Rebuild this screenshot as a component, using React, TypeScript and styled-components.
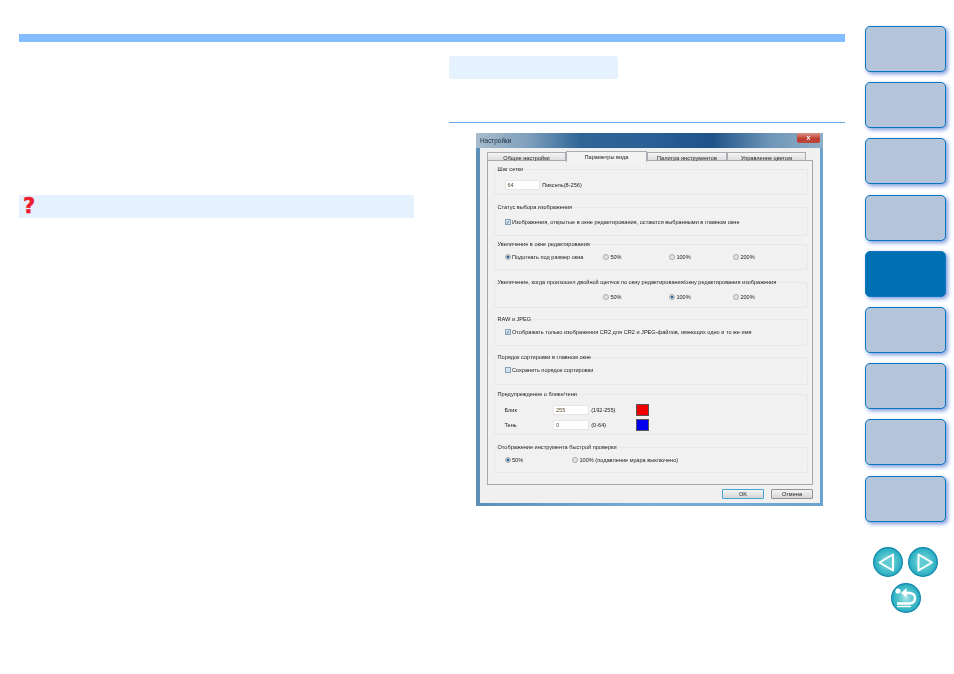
import React from "react";
import styled, { createGlobalStyle } from "styled-components";

const Global = createGlobalStyle`
  html, body { margin: 0; padding: 0; background: #fff; }
  body { font-family: "Liberation Sans", Arial, sans-serif; }
`;

const Page = styled.div`
  display: flex;
  align-items: flex-start;
  width: 954px;
  height: 674px;
  box-sizing: border-box;
  padding: 26px 0 0 19px;
  overflow: hidden;
`;
const Main = styled.main`
  width: 826px;
  margin-top: 8px;
`;
const TopBar = styled.div`
  height: 8px;
  background: #84bcff;
`;
const Columns = styled.div`
  display: grid;
  grid-template-columns: 395px 396px;
  column-gap: 35px;
`;
const LeftCol = styled.section`
  padding-top: 153px;
`;
const Callout = styled.div`
  display: flex;
  align-items: center;
  height: 23px;
  padding-left: 4px;
  background: #e5f1fd;
`;
const Question = styled.span`
  font: bold 21px/23px "DejaVu Sans", sans-serif;
  color: #ee1c2e;
  -webkit-text-stroke: 0.5px #ee1c2e;
`;
const RightCol = styled.section`
  padding-top: 14px;
`;
const Pill = styled.div`
  width: 169px;
  height: 23px;
  border-radius: 3px;
  background: #e5f1fd;
`;
const Rule = styled.div`
  height: 1px;
  margin-top: 43px;
  background: #6aa8ec;
`;
const Dialog = styled.div`
  width: 346.5px;
  height: 373px;
  margin: 10px 0 0 27px;
  display: flex;
  flex-direction: column;
  background: linear-gradient(90deg, #5b8fb8 0, #78add3 50%, #6aa4cf 100%);
  font-family: "Liberation Sans", sans-serif;
  font-size: 5.6px;
  color: #222;
  filter: blur(0.35px);
`;
const TitleBar = styled.div`
  display: flex;
  align-items: flex-start;
  justify-content: space-between;
  height: 15px;
  flex: none;
  padding: 3px 2.5px 0 4px;
  box-sizing: border-box;
  background: linear-gradient(90deg, #a8bccd 0, #7fa0bd 15%, #2f6596 30%, #2a6096 50%, #1e5288 68%, #6f97b8 85%, #8fadc6 100%);
  color: #1c2c3a;
  font-size: 6.4px;
  line-height: 10px;
`;
const CloseBtn = styled.div`
  width: 23px;
  height: 10px;
  margin-top: -3px;
  display: flex;
  align-items: center;
  justify-content: center;
  border-radius: 0 0 2px 2px;
  background: linear-gradient(180deg, #d9948a 0, #c0392b 60%, #b74a3c 100%);
  color: #fff;
  font: bold 7px/10px "Liberation Sans", sans-serif;
`;
const DialogBody = styled.div`
  flex: 1;
  display: flex;
  flex-direction: column;
  margin: 0 2.5px 3.5px 3.5px;
  background: #f0f0f0;
`;
const Tabs = styled.div`
  display: grid;
  grid-template-columns: 79px 81px 80px 79px;
  height: 9px;
  margin: 3px 14px 0 7.5px;
  align-items: end;
`;
const Tab = styled.div<{ $active?: boolean }>`
  height: ${(p) => (p.$active ? 11 : 9)}px;
  box-sizing: border-box;
  margin-bottom: ${(p) => (p.$active ? -1 : 0)}px;
  text-align: center;
  line-height: ${(p) => (p.$active ? 10 : 11)}px;
  border: 1px solid #a9adb1;
  border-bottom: ${(p) => (p.$active ? "none" : "1px solid #a9adb1")};
  background: ${(p) => (p.$active ? "#f3f3f3" : "linear-gradient(180deg,#f4f4f4,#dedede)")};
  position: relative;
  z-index: ${(p) => (p.$active ? 1 : 0)};
`;
const Panel = styled.div`
  height: 325px;
  margin: 0 7px;
  box-sizing: border-box;
  padding: 5px 4.5px 0 6px;
  border: 1px solid #a4a8ab;
  background: #f1f1f1;
`;
const Group = styled.fieldset<{ $h: number; $gap: number }>`
  height: ${(p) => p.$h}px;
  margin: ${(p) => p.$gap}px 0 0;
  padding: 0;
  box-sizing: border-box;
  min-width: 0;
  border: 1px solid #e4e9ee;
  border-radius: 2px;
`;
const Legend = styled.legend`
  margin-left: 2px;
  padding: 0 1px;
  line-height: 7px;
  font-size: 5.6px;
`;
const Row = styled.div<{ $top?: number; $left?: number }>`
  display: flex;
  align-items: center;
  height: 11px;
  margin-top: ${(p) => p.$top ?? 0}px;
  padding-left: ${(p) => p.$left ?? 10}px;
  white-space: nowrap;
`;
const Cell = styled.div<{ $w: number }>`
  display: flex;
  align-items: center;
  width: ${(p) => p.$w}px;
  flex: none;
`;
const Input = styled.div<{ $w: number }>`
  box-sizing: border-box;
  width: ${(p) => p.$w}px;
  height: 10px;
  padding-left: 2px;
  margin-right: 2.7px;
  line-height: 9px;
  background: #fff;
  border: 1px solid #e6e6e6;
  color: #5a4a30;
  flex: none;
`;
const Radio = styled.span<{ $on?: boolean }>`
  box-sizing: border-box;
  width: 6px;
  height: 6px;
  margin-right: 1.5px;
  flex: none;
  border-radius: 50%;
  border: 1px solid #a6acb1;
  background: ${(p) => (p.$on ? "radial-gradient(circle,#2b5f8f 0 45%,#dfe8ef 60%)" : "#e4e4e4")};
`;
const Check = styled.span<{ $on?: boolean }>`
  box-sizing: border-box;
  display: flex;
  align-items: center;
  justify-content: center;
  width: 6.5px;
  height: 6.5px;
  margin-right: 1px;
  flex: none;
  border: 1px solid #8aa0b4;
  background: ${(p) => (p.$on ? "#d6e4f0" : "#cfe3f3")};
  color: #27466a;
  font-size: 5px;
  line-height: 5px;
`;
const Swatch = styled.div<{ $c: string }>`
  width: 13px;
  height: 12px;
  flex: none;
  box-sizing: border-box;
  background: ${(p) => p.$c};
  border: 1px solid #555;
`;
const Footer = styled.div`
  display: flex;
  justify-content: flex-end;
  gap: 7px;
  margin: 4px 7px 0 0;
`;
const Btn = styled.div<{ $primary?: boolean }>`
  width: 42px;
  height: 9.5px;
  box-sizing: border-box;
  text-align: center;
  line-height: 8px;
  border: 1px solid ${(p) => (p.$primary ? "#45a5d6" : "#939393")};
  border-radius: 1px;
  background: linear-gradient(180deg, #f4f4f4, #d6d6d6);
`;

const Sidebar = styled.nav`
  margin-left: 20px;
  width: 81px;
  display: flex;
  flex-direction: column;
  gap: 10.2px;
  align-items: flex-start;
`;
const NavBtn = styled.div<{ $active?: boolean }>`
  width: 81px;
  height: 46px;
  box-sizing: border-box;
  border-radius: 5px;
  border: 1.5px solid #0a78be;
  background: ${(p) => (p.$active ? "#0070b5" : "#b4c5db")};
  box-shadow: 2px 2px 4px #7d9ade;
`;
const Arrows = styled.div`
  width: 81px;
  margin-top: 15px;
  display: grid;
  grid-template-columns: 30px 30px;
  justify-content: center;
  column-gap: 5px;
  row-gap: 6px;
  justify-items: center;
`;
const Round = styled.svg<{ $span?: boolean }>`
  width: 30px;
  height: 30px;
  display: block;
  ${(p) => (p.$span ? "grid-column: 1 / span 2;" : "")}
`;

const Disc = () => (
  <>
    <defs>
      <radialGradient id="disc" cx="50%" cy="50%" r="55%">
        <stop offset="0" stopColor="#a8e4e8" />
        <stop offset="0.55" stopColor="#4cc0cc" />
        <stop offset="1" stopColor="#1ba6bd" />
      </radialGradient>
    </defs>
    <circle cx="15" cy="15" r="14.4" fill="url(#disc)" stroke="#1487ad" strokeWidth="1.2" />
  </>
);

const App = () => (
  <>
    <Global />
    <Page>
      <Main>
        <TopBar />
        <Columns>
          <LeftCol>
            <Callout>
              <Question>?</Question>
            </Callout>
          </LeftCol>
          <RightCol>
            <Pill />
            <Rule />
            <Dialog>
              <TitleBar>
                <span>Настройки</span>
                <CloseBtn>x</CloseBtn>
              </TitleBar>
              <DialogBody>
                <Tabs>
                  <Tab>Общие настройки</Tab>
                  <Tab $active>Параметры вида</Tab>
                  <Tab>Палитра инструментов</Tab>
                  <Tab>Управление цветом</Tab>
                </Tabs>
                <Panel>
                  <Group $h={29} $gap={0}>
                    <Legend>Шаг сетки</Legend>
                    <Row $top={6.5}>
                      <Input $w={35}>64</Input>
                      <span>Пиксель(8-256)</span>
                    </Row>
                  </Group>
                  <Group $h={32.5} $gap={8.5}>
                    <Legend>Статус выбора изображения</Legend>
                    <Row $top={6}>
                      <Check $on>✓</Check>
                      <span>Изображения, открытые в окне редактирования, остаются выбранными в главном окне</span>
                    </Row>
                  </Group>
                  <Group $h={29.5} $gap={4.5}>
                    <Legend>Увеличение в окне редактирования</Legend>
                    <Row $top={4}>
                      <Cell $w={98.4}><Radio $on /><span>Подогнать под размер окна</span></Cell>
                      <Cell $w={66}><Radio /><span>50%</span></Cell>
                      <Cell $w={64}><Radio /><span>100%</span></Cell>
                      <Cell $w={40}><Radio /><span>200%</span></Cell>
                    </Row>
                  </Group>
                  <Group $h={29.5} $gap={8.5}>
                    <Legend>Увеличение, когда произошел двойной щелчок по окну редактирования/окну редактирования изображения</Legend>
                    <Row $top={6} $left={108.4}>
                      <Cell $w={66}><Radio /><span>50%</span></Cell>
                      <Cell $w={64}><Radio $on /><span>100%</span></Cell>
                      <Cell $w={40}><Radio /><span>200%</span></Cell>
                    </Row>
                  </Group>
                  <Group $h={30.5} $gap={7.5}>
                    <Legend>RAW и JPEG</Legend>
                    <Row $top={4}>
                      <Check $on>✓</Check>
                      <span>Отображать только изображения CR2 для CR2 и JPEG-файлов, имеющих одно и то же имя</span>
                    </Row>
                  </Group>
                  <Group $h={31.5} $gap={7.5}>
                    <Legend>Порядок сортировки в главном окне</Legend>
                    <Row $top={4}>
                      <Check />
                      <span>Сохранить порядок сортировки</span>
                    </Row>
                  </Group>
                  <Group $h={44.5} $gap={5.5}>
                    <Legend>Предупреждение о блике/тени</Legend>
                    <Row $top={7}>
                      <Cell $w={48.5}>Блик</Cell>
                      <Input $w={35.5}>255</Input>
                      <Cell $w={45}>(192-255)</Cell>
                      <Swatch $c="#f00000" />
                    </Row>
                    <Row $top={4}>
                      <Cell $w={48.5}>Тень</Cell>
                      <Input $w={35.5}>0</Input>
                      <Cell $w={45}>(0-64)</Cell>
                      <Swatch $c="#0000ee" />
                    </Row>
                  </Group>
                  <Group $h={29.5} $gap={8.5}>
                    <Legend>Отображение инструмента быстрой проверки</Legend>
                    <Row $top={4}>
                      <Cell $w={67.5}><Radio $on /><span>50%</span></Cell>
                      <Cell $w={150}><Radio /><span>100% (подавление муара выключено)</span></Cell>
                    </Row>
                  </Group>
                </Panel>
                <Footer>
                  <Btn $primary>OK</Btn>
                  <Btn>Отмена</Btn>
                </Footer>
              </DialogBody>
            </Dialog>
          </RightCol>
        </Columns>
      </Main>
      <Sidebar>
        <NavBtn />
        <NavBtn />
        <NavBtn />
        <NavBtn />
        <NavBtn $active />
        <NavBtn />
        <NavBtn />
        <NavBtn />
        <NavBtn />
        <Arrows>
          <Round viewBox="0 0 30 30">
            <Disc />
            <path d="M6.5 15.5 L20 7.5 V23.5 Z" fill="#62cbd4" stroke="#fff" strokeWidth="2" strokeLinejoin="round" />
          </Round>
          <Round viewBox="0 0 30 30">
            <Disc />
            <path d="M24 15.5 L10.5 7.5 V23.5 Z" fill="#62cbd4" stroke="#fff" strokeWidth="2" strokeLinejoin="round" />
          </Round>
          <Round $span viewBox="0 0 30 30">
            <Disc />
            <circle cx="7" cy="8" r="2.6" fill="#fff" />
            <path d="M6 20.5 H18 Q24 20.5 24 15 Q24 10 18 10 H14" fill="none" stroke="#fff" strokeWidth="2.4" />
            <path d="M15.5 5 L10 10 L15.5 15 Z" fill="#fff" />
            <path d="M6 23.5 H20" stroke="#fff" strokeWidth="1.4" />
          </Round>
        </Arrows>
      </Sidebar>
    </Page>
  </>
);

export default App;
